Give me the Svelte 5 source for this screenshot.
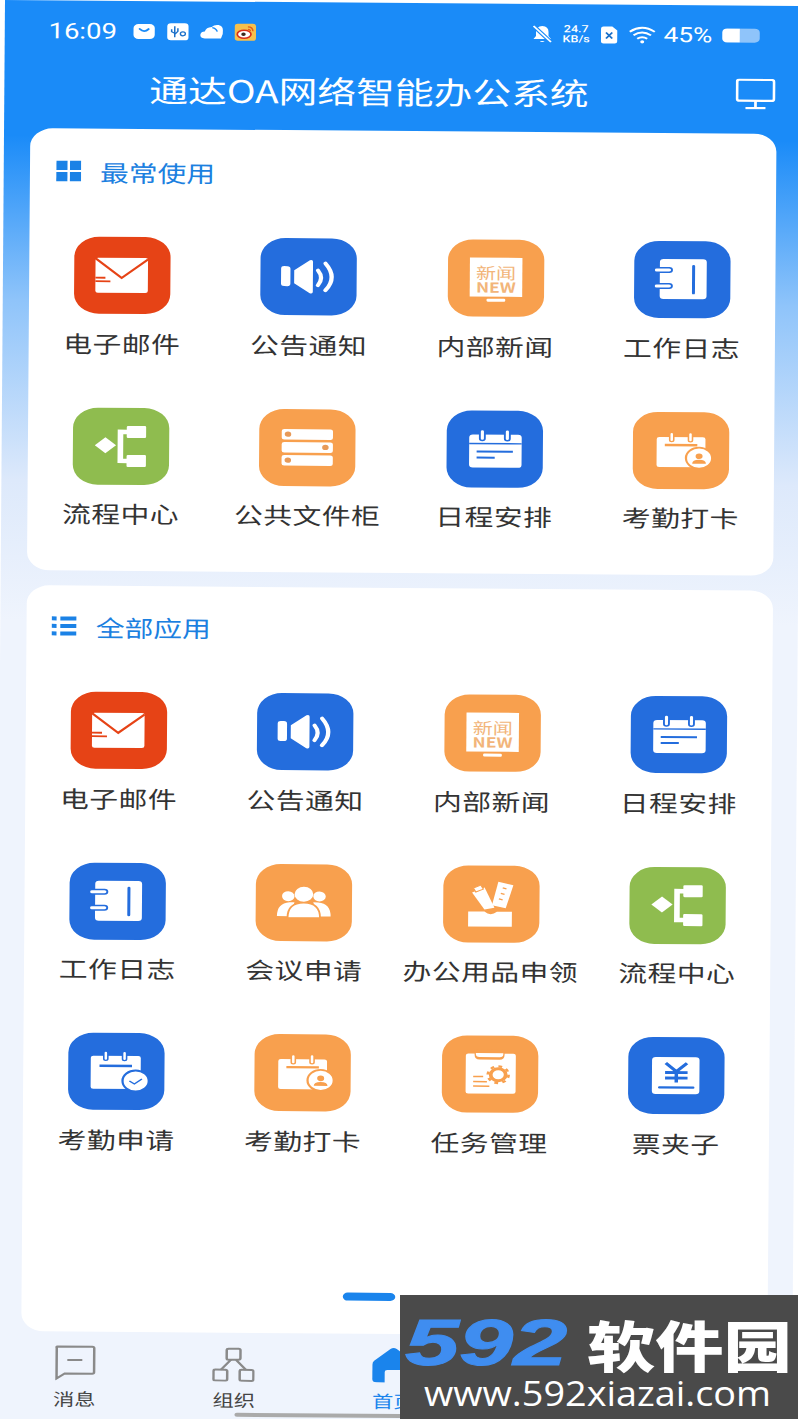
<script>
  const frequent = [
    { name: '电子邮件', icon: 'mail' },
    { name: '公告通知', icon: 'notice' },
    { name: '内部新闻', icon: 'news' },
    { name: '工作日志', icon: 'diary' },
    { name: '流程中心', icon: 'flow' },
    { name: '公共文件柜', icon: 'cabinet' },
    { name: '日程安排', icon: 'calendar' },
    { name: '考勤打卡', icon: 'punch' }
  ];

  const all = [
    { name: '电子邮件', icon: 'mail' },
    { name: '公告通知', icon: 'notice' },
    { name: '内部新闻', icon: 'news' },
    { name: '日程安排', icon: 'calendar' },
    { name: '工作日志', icon: 'diary' },
    { name: '会议申请', icon: 'meeting' },
    { name: '办公用品申领', icon: 'supplies' },
    { name: '流程中心', icon: 'flow' },
    { name: '考勤申请', icon: 'leave' },
    { name: '考勤打卡', icon: 'punch' },
    { name: '任务管理', icon: 'task' },
    { name: '票夹子', icon: 'ticket' }
  ];

  const tiles = {
    mail: 'red',
    notice: 'blue',
    news: 'orange',
    diary: 'blue',
    flow: 'green',
    cabinet: 'orange',
    calendar: 'blue',
    punch: 'orange',
    meeting: 'orange',
    supplies: 'orange',
    leave: 'blue',
    task: 'orange',
    ticket: 'blue'
  };
</script>

{#snippet glyph(icon)}
  <svg viewBox="0 0 77 77" width="77" height="77">
    {#if icon === 'mail'}
      <rect x="17" y="21" width="42" height="35" rx="2" fill="#fff" />
      <path d="M17 21.5 38 41 59 22.5" fill="none" stroke="#e64316" stroke-width="2" />
      <path d="M17 41h8M17 44.5h12" stroke="#e64316" stroke-width="1.8" />
    {:else if icon === 'notice'}
      <rect x="16.5" y="28" width="7.5" height="20" rx="2.5" fill="#fff" />
      <path d="M27 32 39.5 22q2.500-1 2.500 1.500v30q0 2.500-2.500 1.500L27 45z" fill="#fff" />
      <path d="M46 32q5 7.500 0 15M52 25q10 14 0 27" fill="none" stroke="#fff" stroke-width="3.400" stroke-linecap="round" />
    {:else if icon === 'news'}
      <rect x="17.500" y="18" width="42" height="39" fill="#fff" />
      <rect x="31" y="59" width="15" height="3" rx="1" fill="#fff" />
      <text class="tiny"><tspan x="38.500" y="39.500" font-size="16">新闻</tspan><tspan class="bold" x="38.500" y="53" font-size="14">NEW</tspan></text>
    {:else if icon === 'diary'}
      <rect x="20.500" y="18" width="37.500" height="40" rx="3" fill="#fff" />
      <path d="M47.500 25v27" stroke="#246ddd" stroke-width="2.400" stroke-linecap="round" />
      <path d="M18 29h10M18 45h10" stroke="#246ddd" stroke-width="6" stroke-linecap="round" />
      <path d="M18 29h10M18 45h10" stroke="#fff" stroke-width="3" stroke-linecap="round" />
    {:else if icon === 'flow'}
      <path d="M26 29.500 34.500 37.500 26 45.500 17.500 37.500z" fill="#fff" />
      <rect x="43" y="18" width="15.500" height="12" rx="1" fill="#fff" />
      <rect x="43" y="47" width="15.500" height="12" rx="1" fill="#fff" />
      <path d="M44 24h-6v29h6" fill="none" stroke="#fff" stroke-width="4.500" />
    {:else if icon === 'cabinet'}
      <rect x="18" y="20" width="41" height="10.500" rx="2" fill="#fff" />
      <rect x="18" y="33" width="41" height="10.500" rx="2" fill="#fff" />
      <rect x="18" y="46" width="41" height="10.500" rx="2" fill="#fff" />
      <circle cx="23" cy="25" r="2.600" fill="#e89a58" />
      <circle cx="53" cy="38" r="2.600" fill="#e89a58" />
      <circle cx="23" cy="51" r="2.600" fill="#e89a58" />
    {:else if icon === 'calendar'}
      <rect x="18" y="24" width="42" height="33" rx="3" fill="#fff" />
      <path d="M18 33h42" stroke="#246ddd" stroke-width="1.400" />
      <path d="M28.500 21v7M48.500 21v7" stroke="#246ddd" stroke-width="5.500" stroke-linecap="round" />
      <path d="M28.500 21v7M48.500 21v7" stroke="#fff" stroke-width="2.500" stroke-linecap="round" />
      <path d="M24 41h29M24 47h14.500" stroke="#246ddd" stroke-width="2" />
    {:else if icon === 'punch'}
      <rect x="19" y="25" width="39" height="30" rx="2" fill="#fff" />
      <path d="M31 22v6M46 22v6" stroke="#f8a04e" stroke-width="4.500" stroke-linecap="round" />
      <path d="M31 22v6M46 22v6" stroke="#fff" stroke-width="2" stroke-linecap="round" />
      <path d="M25.500 33h26" stroke="#f8a04e" stroke-width="2.400" />
      <circle cx="53" cy="46" r="10.500" fill="#fff" stroke="#f8a04e" stroke-width="1.800" />
      <circle cx="53" cy="44" r="2.800" fill="#f8a04e" />
      <path d="M47.500 51.500q0-4 5.500-4t5.500 4z" fill="#f8a04e" />
    {:else if icon === 'meeting'}
      <circle cx="26" cy="32" r="5" fill="#fff" />
      <circle cx="51" cy="32" r="5" fill="#fff" />
      <path d="M17 52q0-13 10-14h4l-4 14zM60 52q0-13-10-14h-4l4 14z" fill="#fff" />
      <circle cx="38.500" cy="30" r="7.500" fill="#fff" />
      <path d="M25.500 53.500q0-15 13-15t13 15z" fill="#fff" stroke="#f8a04e" stroke-width="1.500" />
    {:else if icon === 'supplies'}
      <path d="M20 46h13q5 5 10 0h12v15H20z" fill="#fff" />
      <path d="M44 16l12 3.500-6 23-11-3z" fill="#fff" />
      <path d="M50.500 23l-3-.8M49 28.500l-3-.8M47.500 34l-3-.8" stroke="#f8a04e" stroke-width="1.300" />
      <path d="M23 27l10-5 8 20-8 2z" fill="#fff" />
      <path d="M24 22.500l6-3 2 4-6 3z" fill="#fff" stroke="#f8a04e" stroke-width="1" />
    {:else if icon === 'leave'}
      <rect x="18" y="23" width="40" height="33" rx="2" fill="#fff" />
      <path d="M30 20v6M45 20v6" stroke="#246ddd" stroke-width="4.500" stroke-linecap="round" />
      <path d="M30 20v6M45 20v6" stroke="#fff" stroke-width="2" stroke-linecap="round" />
      <path d="M25 33h26" stroke="#246ddd" stroke-width="2.400" />
      <circle cx="54" cy="48" r="10.500" fill="#fff" stroke="#246ddd" stroke-width="1.800" />
      <path d="M49 48l4 3 6-5" fill="none" stroke="#246ddd" stroke-width="1.300" />
    {:else if icon === 'task'}
      <rect x="19" y="18" width="40" height="40" rx="2" fill="#fff" />
      <path d="M26 14v5q0 5 4 5h16q4 0 4-5v-5" fill="#f8a04e" />
      <path d="M27 17.500v1q0 3 3 3h16q3 0 3-3v-1" fill="#fff" stroke="none" />
      <circle cx="45" cy="39" r="6" fill="none" stroke="#f8a04e" stroke-width="3" />
      <circle cx="45" cy="39" r="8.300" fill="none" stroke="#f8a04e" stroke-width="2.200" stroke-dasharray="3 3.500" />
      <path d="M25 41h8M25 46h11M25 50.500h13" stroke="#f8a04e" stroke-width="1.500" />
    {:else if icon === 'ticket'}
      <rect x="19" y="20" width="38" height="37" rx="3" fill="#fff" />
      <path d="M30 26l8.500 8.500 8.500-8.500M38.500 34.500v11M29.500 35.500h18M29.500 41h18" fill="none" stroke="#246ddd" stroke-width="2.800" />
      <path d="M25 50.500h27" stroke="#246ddd" stroke-width="2.200" stroke-linecap="round" />
    {/if}
  </svg>
{/snippet}

{#snippet apps(list)}
  <div class="grid">
    {#each list as app}
      <div class="app">
        <div class="tile {tiles[app.icon]}">
          {@render glyph(app.icon)}
        </div>
        <span>{app.name}</span>
      </div>
    {/each}
  </div>
{/snippet}

<div class="screen">
  <div class="status">
    <span class="time">16:09</span>
    <div class="notes">
      <svg viewBox="0 0 19 19" width="19" height="19">
        <rect x="1" y="2" width="17" height="15" rx="4" fill="#fff" />
        <path d="M6 7q3.500 4 7 0" fill="none" stroke="#1a8bf8" stroke-width="1.800" stroke-linecap="round" />
      </svg>
      <svg viewBox="0 0 19 19" width="19" height="19">
        <rect x="1" y="1" width="17" height="17" rx="3" fill="#fff" />
        <path d="M7 4v11M4.500 7v2.500L7 11M9.500 6v3L7 12" fill="none" stroke="#1a6fc8" stroke-width="1.200" />
        <circle cx="13.500" cy="11.500" r="2" fill="none" stroke="#1a6fc8" stroke-width="1.100" />
      </svg>
      <svg viewBox="0 0 19 19" width="19" height="19">
        <path d="M4 16q-4-.5-3.500-4 .5-3 3.500-3 1-4 5.500-4.500 2-2.500 5.500-2 3.500 1 3.500 5 .5 4-1.500 8.500z" fill="#fff" />
        <path d="M10 5q3 .5 4 4" fill="none" stroke="#1a8bf8" stroke-width="1.200" />
      </svg>
      <svg viewBox="0 0 19 19" width="19" height="19">
        <rect x="1" y="1" width="17" height="17" rx="2.500" fill="#f6c04c" />
        <ellipse cx="8.500" cy="11.500" rx="5.500" ry="4" fill="#fff" stroke="#d8301c" stroke-width="1.400" />
        <circle cx="8" cy="11.500" r="1.800" fill="#3a2a20" />
        <path d="M11.500 4q4 0 4 4.500M11.500 6.500q2 0 2 2" fill="none" stroke="#e25c1c" stroke-width="1.200" />
      </svg>
    </div>
    <div class="sys">
      <svg viewBox="0 0 16 20" width="16" height="20">
        <path d="M8 2q-5 .5-5 6v4l-2 3h14l-2-3V8q0-5.500-5-6z" fill="#fff" />
        <path d="M6 17q2 2 4 0z" fill="#fff" />
        <path d="M1 2l14 16" stroke="#1a8bf8" stroke-width="3.500" />
        <path d="M1 2l14 16" stroke="#fff" stroke-width="1.500" />
      </svg>
      <span class="speed">24.7<br />KB/s</span>
      <svg viewBox="0 0 15 20" width="15" height="20">
        <path d="M1 4q0-2 2-2h7l4 4v11q0 2-2 2H3q-2 0-2-2z" fill="#fff" />
        <path d="M5 8l5 6M10 8l-5 6" stroke="#1a6fc8" stroke-width="1.500" />
      </svg>
      <svg class="wifi" viewBox="0 0 22 18" width="22" height="18">
        <path d="M1 6q10-8 20 0M4 9.500q7-5.500 14 0M7 13q4-3 8 0" fill="none" stroke="#fff" stroke-width="1.800" />
        <circle cx="11" cy="16" r="1.600" fill="#fff" />
      </svg>
      <span class="pct">45%</span>
      <div class="battery"><i></i></div>
    </div>
  </div>

  <div class="titlebar">
    <h1>通达OA网络智能办公系统</h1>
    <svg viewBox="0 0 32 31" width="32" height="31">
      <rect x="1.200" y="1.200" width="29.600" height="21" rx="2" fill="none" stroke="#fff" stroke-width="2.200" />
      <path d="M16 22v7M8 29.500h16" stroke="#fff" stroke-width="2.200" />
    </svg>
  </div>

  <section class="card first">
    <header>
      <svg viewBox="0 0 20 21" width="20" height="21">
        <rect width="9" height="9.500" fill="#1b82e6" />
        <rect x="11" width="9" height="9.500" fill="#1b82e6" />
        <rect y="11.500" width="9" height="9.500" fill="#1b82e6" />
        <rect x="11" y="11.500" width="9" height="9.500" fill="#1b82e6" />
      </svg>
      <h2>最常使用</h2>
    </header>
    {@render apps(frequent)}
  </section>

  <section class="card second">
    <header>
      <svg viewBox="0 0 20 21" width="20" height="21">
        <path d="M0 3h4M7 3h13M0 10.500h4M7 10.500h13M0 18h4M7 18h13" stroke="#1b82e6" stroke-width="4" />
      </svg>
      <h2>全部应用</h2>
    </header>
    {@render apps(all)}
    <div class="pager"></div>
  </section>

  <nav class="tabs">
    <div class="tab">
      <svg viewBox="0 0 34 36" width="34" height="36">
        <path d="M3 2h28q1.500 0 1.500 1.500v24q0 1.500-1.500 1.500H9l-6.500 5V3.500Q2 2 3 2z" fill="none" stroke="#8a8a8a" stroke-width="2" />
        <path d="M11 15.500h12" stroke="#8a8a8a" stroke-width="2" />
      </svg>
      <span>消息</span>
    </div>
    <div class="tab">
      <svg viewBox="0 0 34 36" width="34" height="36">
        <g fill="none" stroke="#8a8a8a" stroke-width="2">
          <rect x="11.500" y="3" width="11" height="11" rx="1.500" />
          <rect x="1" y="24" width="11" height="11" rx="1.500" />
          <rect x="22" y="24" width="11" height="11" rx="1.500" />
          <path d="M15 14 7 24M19 14l8 10" />
        </g>
      </svg>
      <span>组织</span>
    </div>
    <div class="tab active">
      <svg viewBox="0 0 34 36" width="34" height="36">
        <path d="M14.500 2q2.500-2 5 0l13 12q1.500 1.500 1.500 4v14q0 3.500-3.500 3.500H24V25q0-2-2-2H12q-2 0-2 2v10.500H3.500Q0 35.500 0 32V18q0-2.500 1.500-4z" fill="#1a84ec" />
      </svg>
      <span>首页</span>
    </div>
  </nav>

  <div class="homebar"></div>
</div>

<div class="watermark">
  <div class="brand">
    <span class="digits">592</span>
    <span class="cn">软件园</span>
  </div>
  <span class="url">www.592xiazai.com</span>
</div>

<style>
  :global(html), :global(body) {
    margin: 0;
    height: 1419px;
    overflow: hidden;
    background: #fff;
  }

  .screen {
    position: relative;
    width: 638px;
    height: 1432px;
    transform-origin: 0 0;
    transform: translateX(5px) rotate(0.43deg) scaleX(1.25);
    background: linear-gradient(#1a8bf8 0, #1a8bf8 135px, #8fc4fa 300px, #dde9fb 480px, #eff4fd 620px);
    font-family: "Noto Sans CJK SC", sans-serif;
  }

  .status {
    display: flex;
    align-items: center;
    height: 24px;
    padding: 18px 34px 0 35px;
    color: #fff;
  }

  .time {
    width: 67px;
    font: 22px Roboto, sans-serif;
  }

  .notes {
    display: flex;
    gap: 8px;
  }

  .sys {
    display: flex;
    align-items: center;
    gap: 8px;
    margin-left: auto;
  }

  .speed {
    font: 500 10px/10px Roboto, sans-serif;
    text-align: center;
  }

  .pct {
    font: 21px Roboto, sans-serif;
    margin-left: -2px;
  }

  .battery {
    width: 30px;
    height: 14px;
    border-radius: 4px;
    background: #8fc4fa;
    overflow: hidden;
  }

  .battery i {
    display: block;
    width: 14px;
    height: 100%;
    background: #fff;
  }

  .titlebar {
    display: flex;
    align-items: center;
    justify-content: space-between;
    height: 40px;
    margin: 26px 0 20px;
    padding: 0 21px 0 116px;
  }

  h1 {
    margin: 0;
    font-size: 31px;
    font-weight: 400;
    line-height: 40px;
    color: #fff;
    white-space: nowrap;
  }

  .card {
    display: flex;
    flex-direction: column;
    margin: 0 20px 0 21px;
    border-radius: 18px;
    background: #fff;
  }

  .first {
    height: 442px;
    margin-bottom: 15px;
  }

  .second {
    height: 746px;
  }

  header {
    display: flex;
    align-items: center;
    height: 22px;
  }

  .first header {
    gap: 15.2px;
    margin: 31.5px 0 54.5px 21px;
  }

  .second header {
    gap: 15.4px;
    margin: 29.5px 0 54.5px 20px;
  }

  h2 {
    margin: 0;
    font-size: 23px;
    font-weight: 400;
    line-height: 26px;
    color: #1b80e0;
  }

  .grid {
    display: grid;
    grid-template-columns: repeat(4, 1fr);
    row-gap: 49px;
  }

  .app {
    display: flex;
    flex-direction: column;
    align-items: center;
  }

  .app span {
    margin-top: 12.5px;
    font-size: 23px;
    letter-spacing: 0.4px;
    line-height: 32px;
    color: #333;
    white-space: nowrap;
  }

  .tile {
    width: 77px;
    height: 77px;
    border-radius: 20px;
  }

  .tile svg {
    display: block;
  }

  .red { background: #e64316; }
  .blue { background: #246ddd; }
  .orange { background: #f8a04e; }
  .green { background: #8fbc4f; }

  .tiny {
    text-anchor: middle;
    fill: #f2b57a;
    font-family: "Noto Sans CJK SC", sans-serif;
  }

  .bold {
    font-weight: 700;
  }

  .pager {
    width: 42px;
    height: 8px;
    margin: auto 0 33px 257px;
    border-radius: 4px;
    background: #1a84ec;
  }

  .tabs {
    display: grid;
    grid-template-columns: repeat(5, 1fr);
    padding-top: 13px;
  }

  .tab {
    display: flex;
    flex-direction: column;
    align-items: center;
    gap: 7px;
    font-size: 17px;
    line-height: 22px;
    color: #444;
  }

  .tab svg {
    display: block;
  }

  .tab.active {
    color: #1a84ec;
  }

  .homebar {
    position: absolute;
    left: 192px;
    top: 1411px;
    width: 254px;
    height: 4px;
    border-radius: 2px;
    background: #aaa;
  }

  .watermark {
    position: absolute;
    left: 400px;
    top: 1295px;
    display: flex;
    flex-direction: column;
    width: 398px;
    height: 124px;
    overflow: hidden;
    background: #4a4a4a;
    color: #fff;
  }

  .brand {
    position: relative;
    height: 78px;
  }

  .digits {
    position: absolute;
    left: 5px;
    top: 19px;
    font: italic 700 64px/59px "Liberation Sans", sans-serif;
    color: #3f8df0;
    -webkit-text-stroke: 1px #3f8df0;
    transform-origin: 0 50%;
    transform: scaleX(1.52);
  }

  .cn {
    position: absolute;
    left: 187px;
    top: 18px;
    font: 900 55px/60px "Noto Sans CJK SC", sans-serif;
    white-space: nowrap;
    transform-origin: 0 50%;
    transform: scaleX(1.24);
  }

  .url {
    align-self: flex-start;
    margin-left: 24px;
    font: 500 35px/40px "Open Sans", sans-serif;
    white-space: nowrap;
    transform-origin: 0 50%;
    transform: scaleX(1.08);
  }
</style>
